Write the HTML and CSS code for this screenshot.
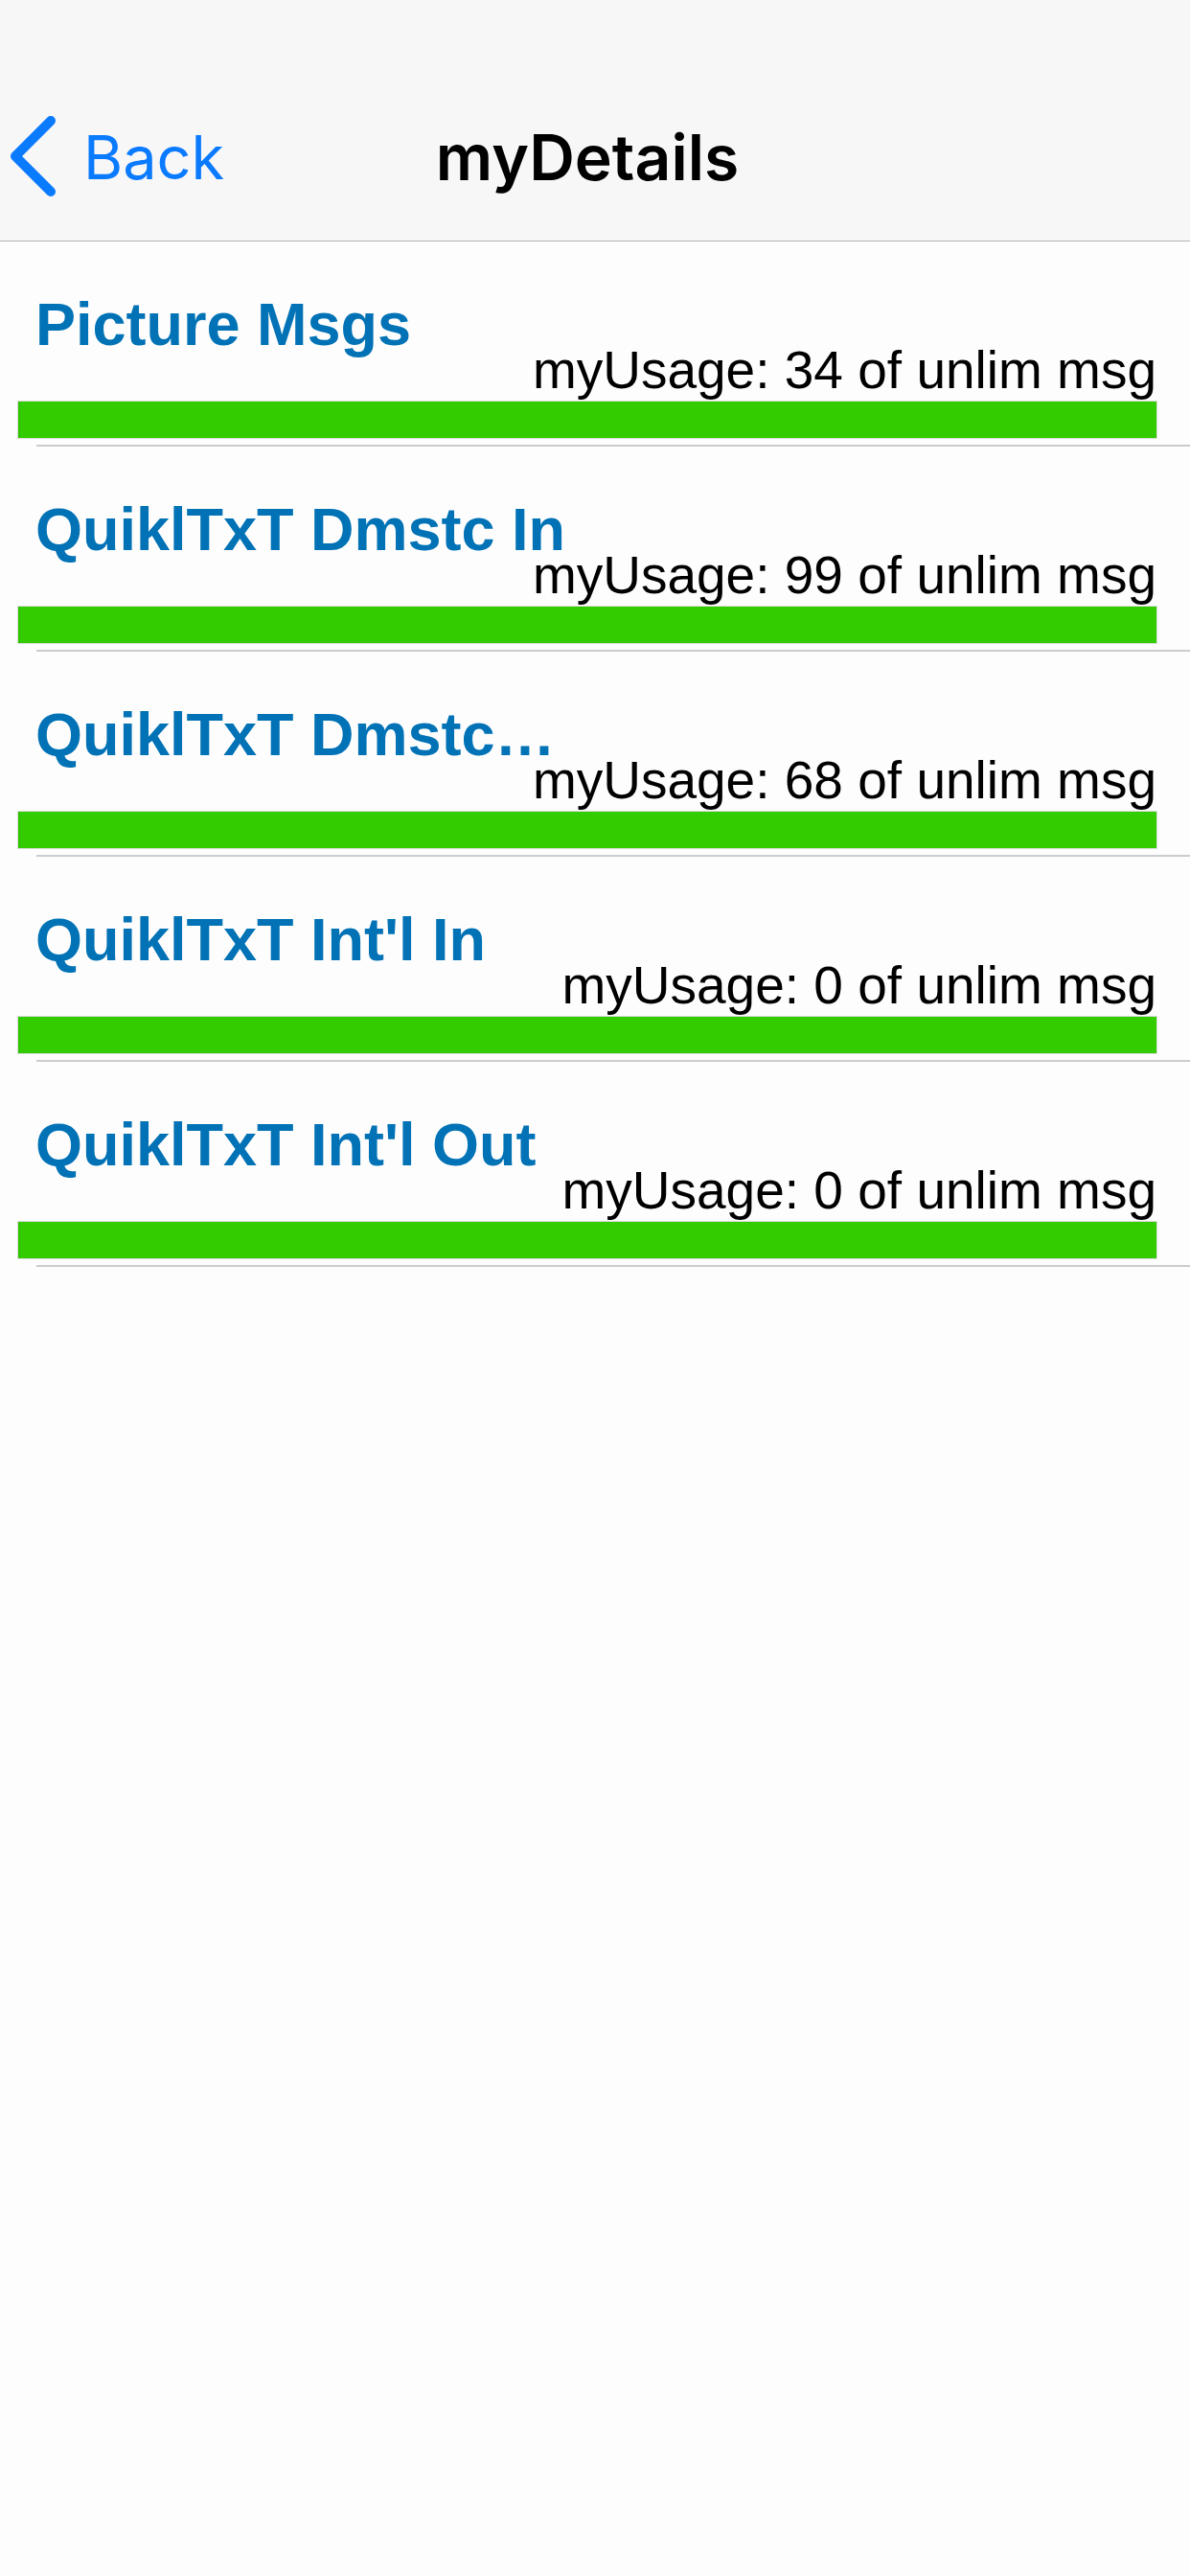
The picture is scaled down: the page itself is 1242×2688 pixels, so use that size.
FILE: index.html
```html
<!DOCTYPE html>
<html>
<head>
<meta charset="utf-8">
<link rel="stylesheet" href="styles.css">
</head>
<body>
<header class="navbar">
  <div class="nav">
    <div class="back">
      <svg class="chev" width="52" height="86" viewBox="0 0 52 86"><path d="M43 5 L6 42 L43 79" fill="none" stroke="#0a7aff" stroke-width="10" stroke-linecap="round" stroke-linejoin="round"/></svg>
      <span class="back-label">Back</span>
    </div>
    <div class="title">myDetails</div>
    <div></div>
  </div>
</header>
<main class="list">
  <section class="row">
    <div class="name">Picture Msgs</div>
    <div class="usage">myUsage: 34 of unlim msg</div>
    <div class="bar"><div class="fill" style="width:100%"></div></div>
    <div class="sep"></div>
  </section>
  <section class="row">
    <div class="name">QuiklTxT Dmstc In</div>
    <div class="usage">myUsage: 99 of unlim msg</div>
    <div class="bar"><div class="fill" style="width:100%"></div></div>
    <div class="sep"></div>
  </section>
  <section class="row">
    <div class="name">QuiklTxT Dmstc…</div>
    <div class="usage">myUsage: 68 of unlim msg</div>
    <div class="bar"><div class="fill" style="width:100%"></div></div>
    <div class="sep"></div>
  </section>
  <section class="row">
    <div class="name">QuiklTxT Int'l In</div>
    <div class="usage">myUsage: 0 of unlim msg</div>
    <div class="bar"><div class="fill" style="width:100%"></div></div>
    <div class="sep"></div>
  </section>
  <section class="row">
    <div class="name">QuiklTxT Int'l Out</div>
    <div class="usage">myUsage: 0 of unlim msg</div>
    <div class="bar"><div class="fill" style="width:100%"></div></div>
    <div class="sep"></div>
  </section>
</main>
</body>
</html>
```
FILE: styles.css
```css
html, body {
  margin: 0;
  padding: 0;
  background: #fdfdfd;
}
body {
  width: 1242px;
  min-height: 2688px;
  font-family: "Liberation Sans", Arial, sans-serif;
}
.navbar {
  background: #f7f7f7;
  border-bottom: 1px solid #b4b4b4;
  height: 251px;
  box-sizing: content-box;
}
.nav {
  display: grid;
  grid-template-columns: 1fr auto 1fr;
  align-items: center;
  height: 120px;
  padding-top: 104px;
}
.back {
  display: flex;
  align-items: center;
  padding-left: 10px;
  gap: 25px;
  color: #0a7aff;
}
.chev {
  display: block;
}
.back-label {
  font-family: Inter, "Noto Sans", sans-serif;
  font-size: 63px;
  line-height: 68px;
  font-weight: 400;
}
.title {
  font-family: Inter, "Noto Sans", sans-serif;
  font-size: 66px;
  line-height: 68px;
  font-weight: 600;
  color: #000;
  padding-right: 16px;
}
.list {
  display: flex;
  flex-direction: column;
}
.row {
  display: flex;
  flex-direction: column;
  padding-top: 61px;
}
.name {
  font-weight: 700;
  font-size: 63px;
  line-height: 50px;
  color: #0072b5;
  padding-left: 37px;
  white-space: nowrap;
}
.usage {
  font-size: 55px;
  line-height: 46px;
  color: #000;
  text-align: right;
  padding-right: 35px;
  white-space: nowrap;
}
.bar {
  margin: 9px 34px 0 18px;
  height: 38px;
  border: 1px solid #dcdcdc;
  background: #ffffff;
  display: flex;
}
.fill {
  background: #33cc00;
  border-left: 2px solid #2fc400;
  box-sizing: border-box;
}
.sep {
  margin-top: 6px;
  margin-left: 38px;
  height: 2px;
  background: #cbcbd0;
}
```
